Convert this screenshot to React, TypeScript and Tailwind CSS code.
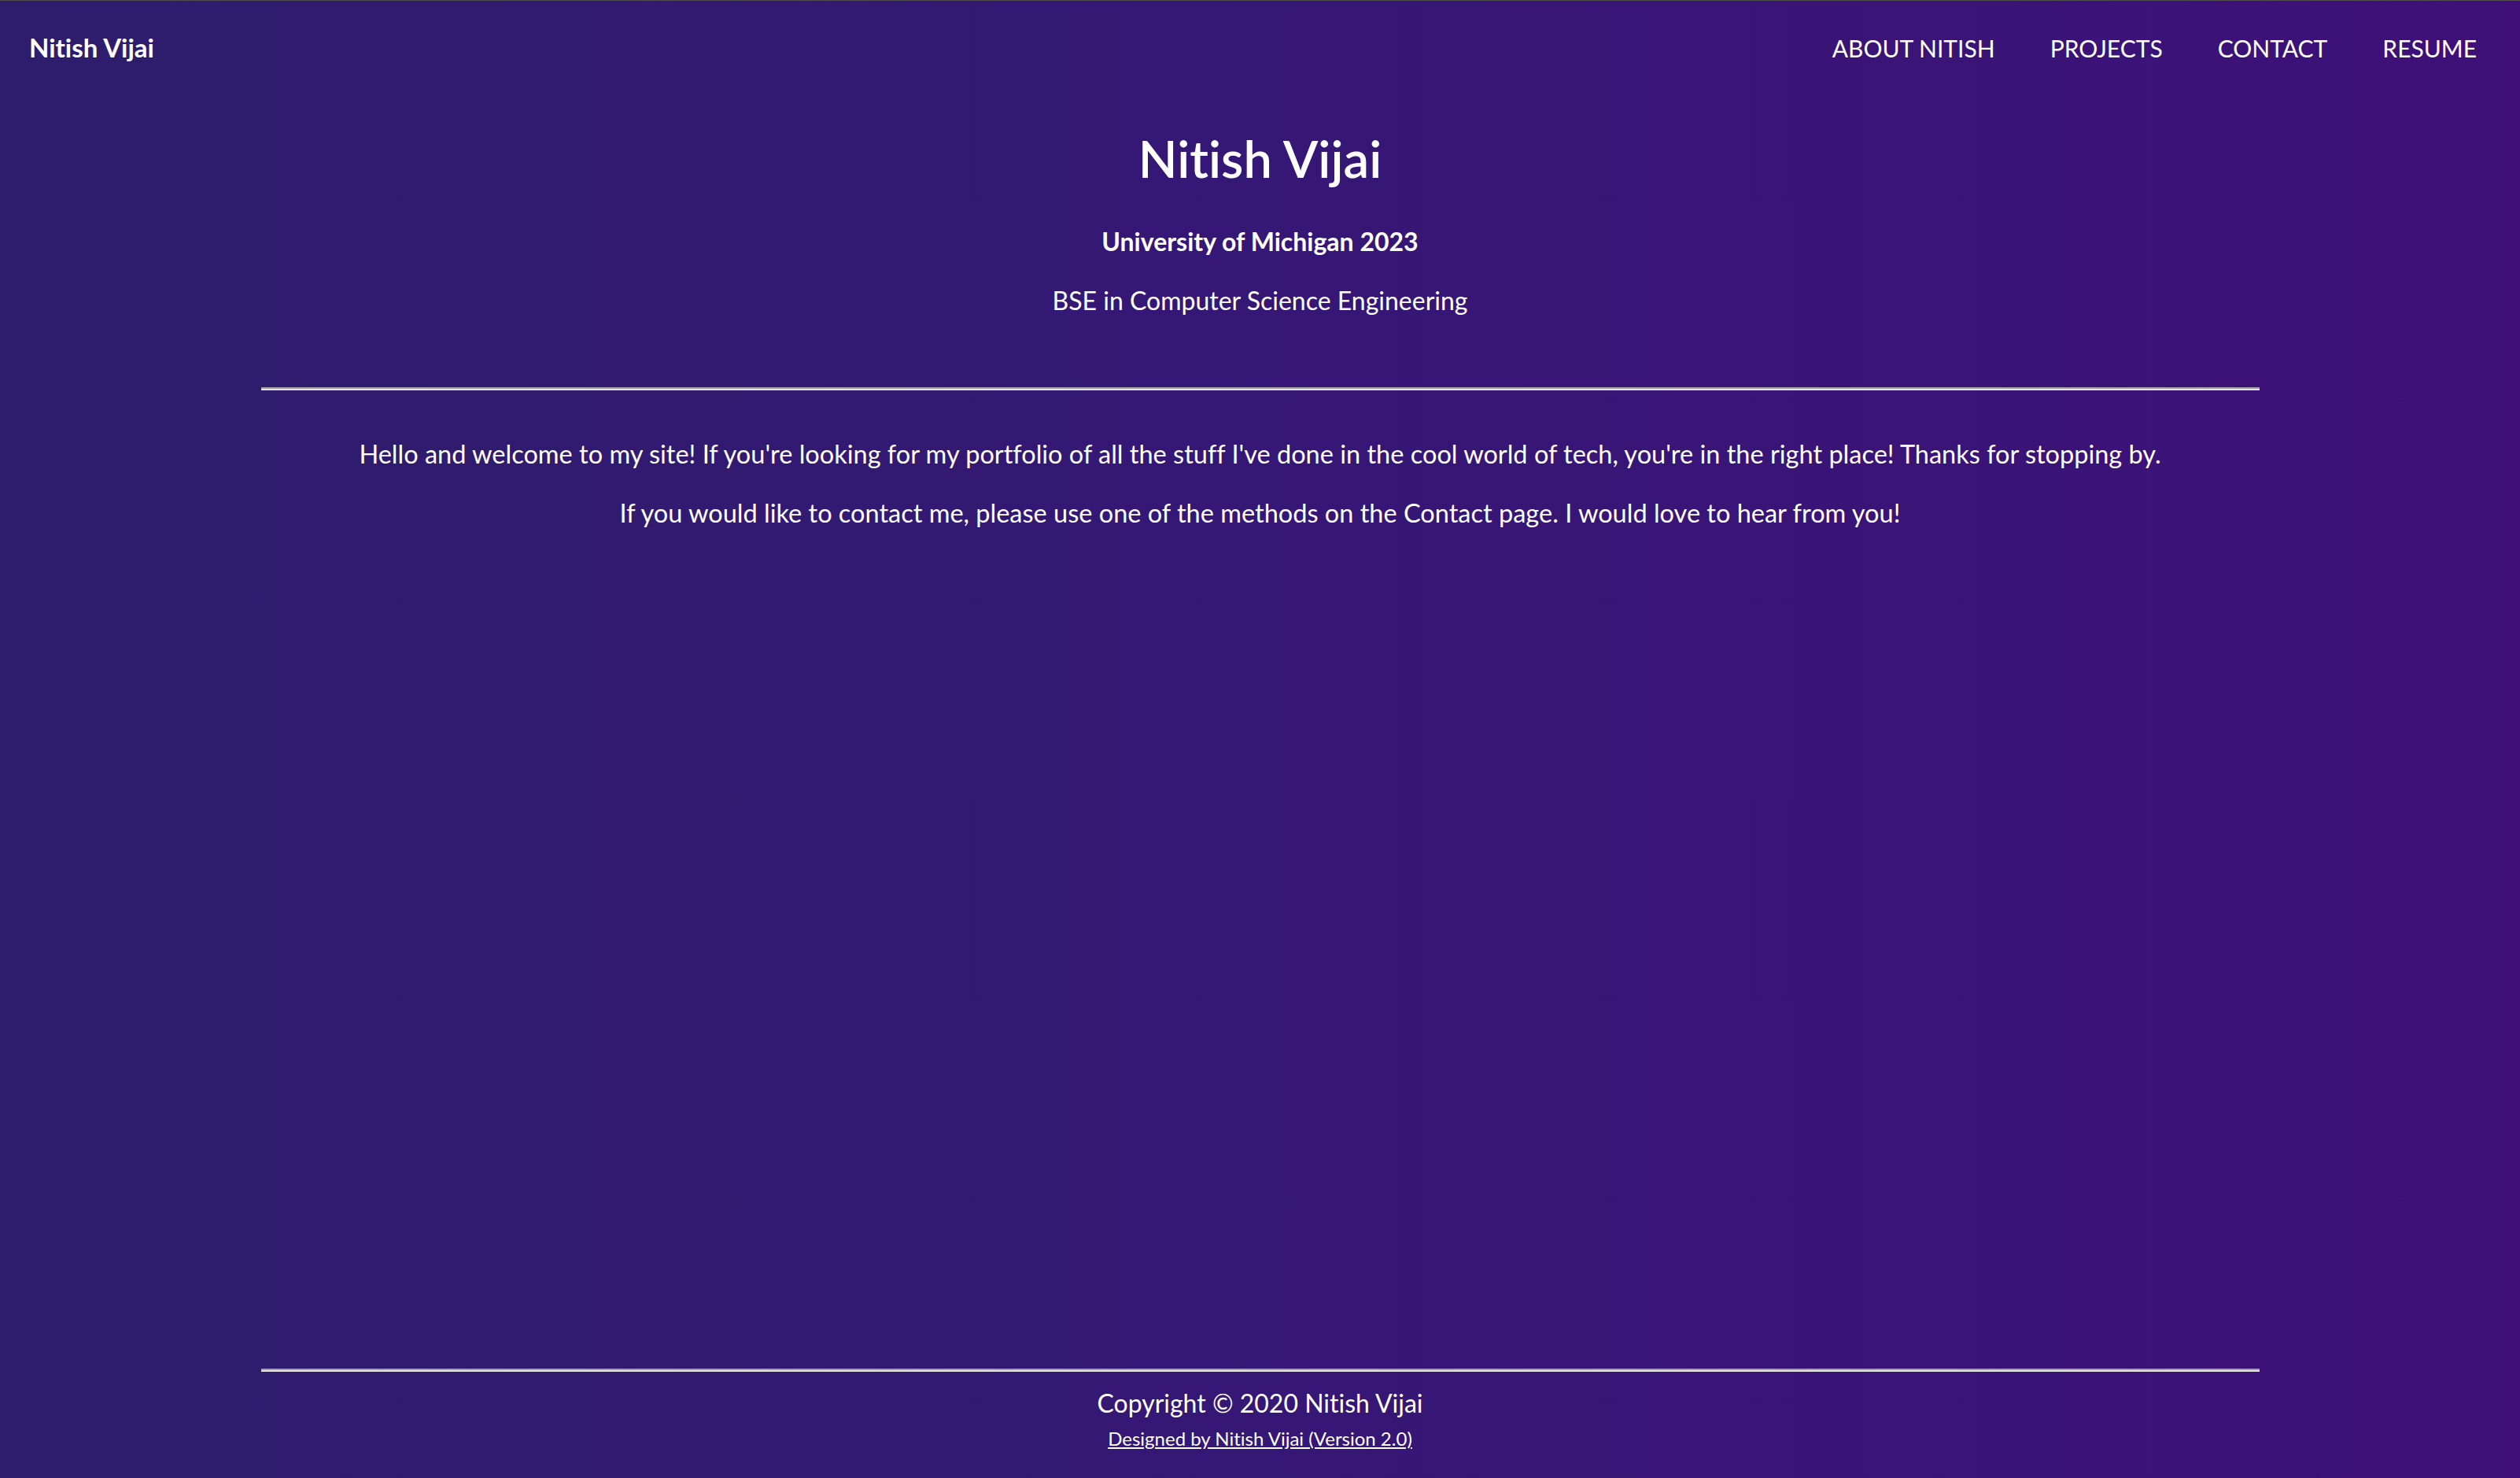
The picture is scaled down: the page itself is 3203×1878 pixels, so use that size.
const font = { fontFamily: "Lato, 'Open Sans', sans-serif" };

const links = ["ABOUT NITISH", "PROJECTS", "CONTACT", "RESUME"];

function Rule() {
  return <div className="h-0 w-full border-t-2 border-b-2 border-t-[#a2a2a2] border-b-[#e6e6e6]" />;
}

export default function App() {
  return (
    <div
      className="flex min-h-screen flex-col border-t border-[#4e4e4e] bg-gradient-to-r from-[#2d1d6b] via-[#351775] to-[#3e1078] text-white [font-variant-ligatures:none]"
      style={font}
    >
      <nav className="flex h-[119px] items-center justify-between pl-[37px] pr-[55px]">
        <a className="text-[33px] font-bold leading-none">Nitish Vijai</a>
        <ul className="flex items-center gap-[70px] text-[30px] leading-none">
          {links.map((l) => (
            <li key={l}>
              <a>{l}</a>
            </li>
          ))}
        </ul>
      </nav>

      <main className="mx-auto flex w-[2540px] flex-1 flex-col items-center text-center">
        <h1 className="mt-[41px] text-[65px] font-semibold leading-[80px]">Nitish Vijai</h1>
        <h5 className="mt-[46px] text-[32px] font-bold leading-[40px]">University of Michigan 2023</h5>
        <p className="mt-[35px] text-[32px] leading-[40px]">BSE in Computer Science Engineering</p>
        <div className="mt-[90px] w-full">
          <Rule />
        </div>
        <p className="mt-[61px] text-[32.5px] leading-[40px]">
          Hello and welcome to my site! If you're looking for my portfolio of all the stuff I've done in the cool
          world of tech, you're in the right place! Thanks for stopping by.
        </p>
        <p className="mt-[35px] text-[32.5px] leading-[40px]">
          If you would like to contact me, please use one of the methods on the Contact page. I would love to hear
          from you!
        </p>
      </main>

      <footer className="mx-auto flex w-[2540px] flex-col items-center pb-[35px] text-center">
        <Rule />
        <p className="mt-[20px] text-[32px] leading-[40px]">Copyright © 2020 Nitish Vijai</p>
        <a className="mt-[10px] text-[24px] leading-[30px] underline">Designed by Nitish Vijai (Version 2.0)</a>
      </footer>
    </div>
  );
}
